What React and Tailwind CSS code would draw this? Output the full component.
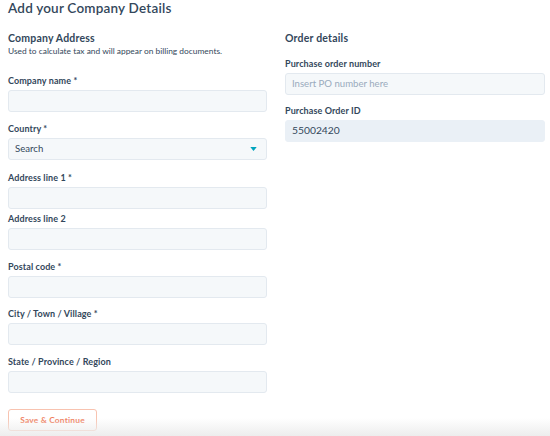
import React from "react";

const font = { fontFamily: '"Lato", "Open Sans", Arial, sans-serif' };

function Label({ children }) {
  return (
    <div className="text-[9px] leading-[12px] font-bold text-[#33475b] mb-[3px] tracking-[0.1px]">{children}</div>
  );
}

function Input({ placeholder, value, readOnly }) {
  return (
    <div
      className={
        "h-[22px] w-full rounded-[3px] border flex items-center px-[6px] " +
        (readOnly
          ? "bg-[#eaf0f6] border-[#eaf0f6] text-[#33475b] text-[10.3px]"
          : "bg-[#f5f8fa] border-[#e3e9ef] text-[#33475b] text-[9.6px]")
      }
    >
      {value ? <span>{value}</span> : placeholder ? <span className="text-[#9aabbd]">{placeholder}</span> : null}
    </div>
  );
}

export default function App() {
  return (
    <div className="relative w-[550px] h-[436px] overflow-hidden bg-white text-[#33475b]" style={font}>
      <div className="pl-[8px]">
        <h1 className="text-[13.5px] leading-[16px] font-semibold text-[#33475b] tracking-[0.2px]">Add your Company Details</h1>
        <div className="flex gap-[18px]">
          <div className="w-[259px] shrink-0 flex flex-col">
            <div className="mt-[14px] text-[10.5px] leading-[16px] font-bold tracking-[0.2px]">Company Address</div>
            <div className="text-[8.4px] leading-[13px] mt-[-1px] text-[#33475b]">Used to calculate tax and will appear on billing documents.</div>

            <div className="mt-[17px]">
              <Label>Company name *</Label>
              <Input />
            </div>
            <div className="mt-[11px]">
              <Label>Country *</Label>
              <div className="h-[22px] w-full rounded-[3px] border border-[#e3e9ef] bg-[#f5f8fa] flex items-center justify-between pl-[6px] pr-[9px] text-[9.6px] text-[#33475b]">
                <span>Search</span>
                <svg width="7" height="4" viewBox="0 0 8 5"><path d="M0 0 L8 0 L4 5 Z" fill="#00a4bd" /></svg>
              </div>
            </div>
            <div className="mt-[12px]">
              <Label>Address line 1 *</Label>
              <Input />
            </div>
            <div className="mt-[4px]">
              <Label>Address line 2</Label>
              <Input />
            </div>
            <div className="mt-[11px]">
              <Label>Postal code *</Label>
              <Input />
            </div>
            <div className="mt-[10px]">
              <Label>City / Town / Village *</Label>
              <Input />
            </div>
            <div className="mt-[11px]">
              <Label>State / Province / Region</Label>
              <Input />
            </div>
            <div className="mt-[16px]">
              <button className="h-[22px] w-[89px] rounded-[3px] border border-[#f8c3b0] bg-white text-[#f07c5b] text-[8.4px] font-bold flex items-center justify-center tracking-[0.2px]">
                Save &amp; Continue
              </button>
            </div>
          </div>

          <div className="w-[260px] shrink-0 flex flex-col">
            <div className="mt-[14px] text-[10.5px] leading-[16px] font-bold tracking-[0.2px]">Order details</div>
            <div className="mt-[12px]">
              <Label>Purchase order number</Label>
              <Input placeholder="Insert PO number here" />
            </div>
            <div className="mt-[10px]">
              <Label>Purchase Order ID</Label>
              <Input value="55002420" readOnly />
            </div>
          </div>
        </div>
      </div>
      <div className="absolute left-0 right-0 bottom-0 h-[18px] bg-gradient-to-b from-transparent to-[#ededed] pointer-events-none" />
    </div>
  );
}
